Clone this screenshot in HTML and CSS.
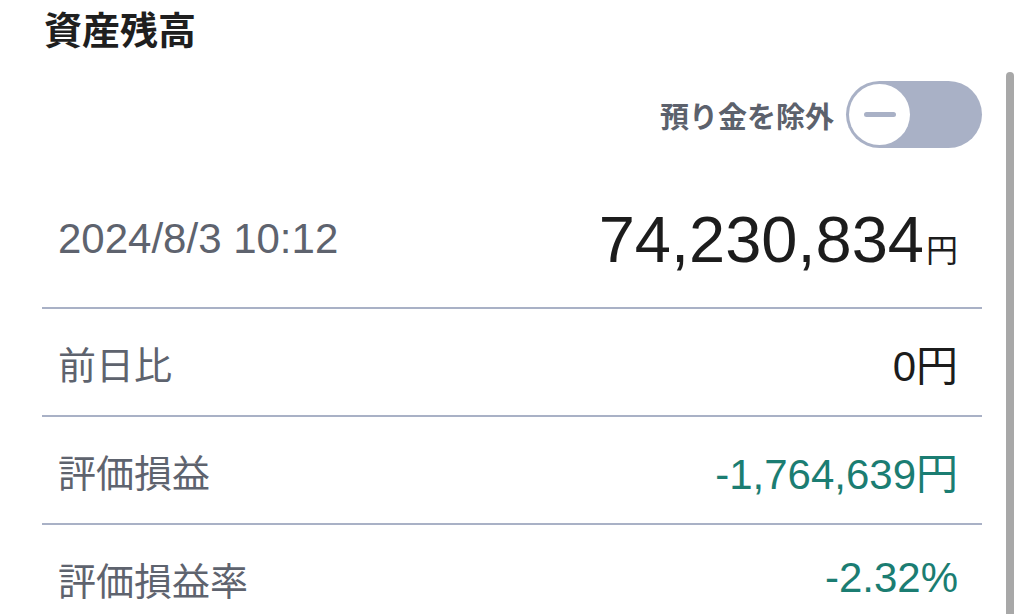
FILE: index.html
```html
<!DOCTYPE html>
<html lang="ja">
<head>
    <meta charset="UTF-8">
    <meta name="viewport" content="width=device-width, initial-scale=1.0">
    <title>資産残高</title>
    <link rel="stylesheet" href="styles.css">
</head>
<body>
    <div class="page">
        <h1 class="title">資産残高</h1>

        <div class="toggle-row">
            <span class="toggle-label">預り金を除外</span>
            <span class="toggle">
                <span class="knob"><span class="minus"></span></span>
            </span>
        </div>

        <div class="row row-main">
            <span class="date">2024/8/3 10:12</span>
            <span class="total">74,230,834<span class="yen">円</span></span>
        </div>
        <div class="row">
            <span class="label">前日比</span>
            <span class="value">0円</span>
        </div>
        <div class="row">
            <span class="label">評価損益</span>
            <span class="value minus-value">-1,764,639円</span>
        </div>
        <div class="row">
            <span class="label">評価損益率</span>
            <span class="value minus-value">-2.32%</span>
        </div>
    </div>
    <div class="scrollbar"></div>
</body>
</html>
```

FILE: styles.css
```css
/* General Styling */
body {
    margin: 0;
    background: #fff;
    font-family: "Liberation Sans", "Noto Sans CJK JP", sans-serif;
    color: #1c1c1c;
    overflow: hidden;
}

.page {
    padding: 0 42px;
}

.title {
    margin: 0;
    padding: 9px 0 0 2px;
    font-size: 38px;
    line-height: 44px;
    font-weight: 700;
    color: #1f1f1f;
}

/* Toggle */
.toggle-row {
    display: flex;
    justify-content: flex-end;
    align-items: center;
    gap: 12px;
    margin-top: 28px;
}

.toggle-label {
    font-size: 29px;
    font-weight: 700;
    color: #5c616c;
}

.toggle {
    display: flex;
    align-items: center;
    width: 136px;
    height: 67px;
    padding: 0 3px;
    box-sizing: border-box;
    border-radius: 34px;
    background: #a9b1c6;
}

.knob {
    display: flex;
    align-items: center;
    justify-content: center;
    width: 61px;
    height: 61px;
    border-radius: 50%;
    background: #fff;
}

.minus {
    width: 32px;
    height: 5px;
    border-radius: 3px;
    background: #a9b1c6;
}

/* Rows */
.row {
    display: flex;
    justify-content: space-between;
    align-items: center;
    height: 108px;
    padding: 0 24px 0 16px;
    box-sizing: border-box;
    border-bottom: 2px solid #a9b1c6;
}

.row-main {
    height: 138px;
    margin-top: 23px;
}

.date {
    font-size: 42px;
    color: #5e636e;
}

.total {
    font-size: 65px;
    color: #1c1c1c;
}

.yen {
    margin-left: 2px;
    font-size: 32px;
}

.label {
    font-size: 38px;
    color: #5e636e;
}

.value {
    font-size: 42px;
    color: #1c1c1c;
}

.minus-value {
    color: #1b7d72;
}

.scrollbar {
    position: fixed;
    top: 72px;
    right: 10px;
    bottom: -10px;
    width: 8px;
    border-radius: 4px;
    background: #a8a8a8;
}
```
